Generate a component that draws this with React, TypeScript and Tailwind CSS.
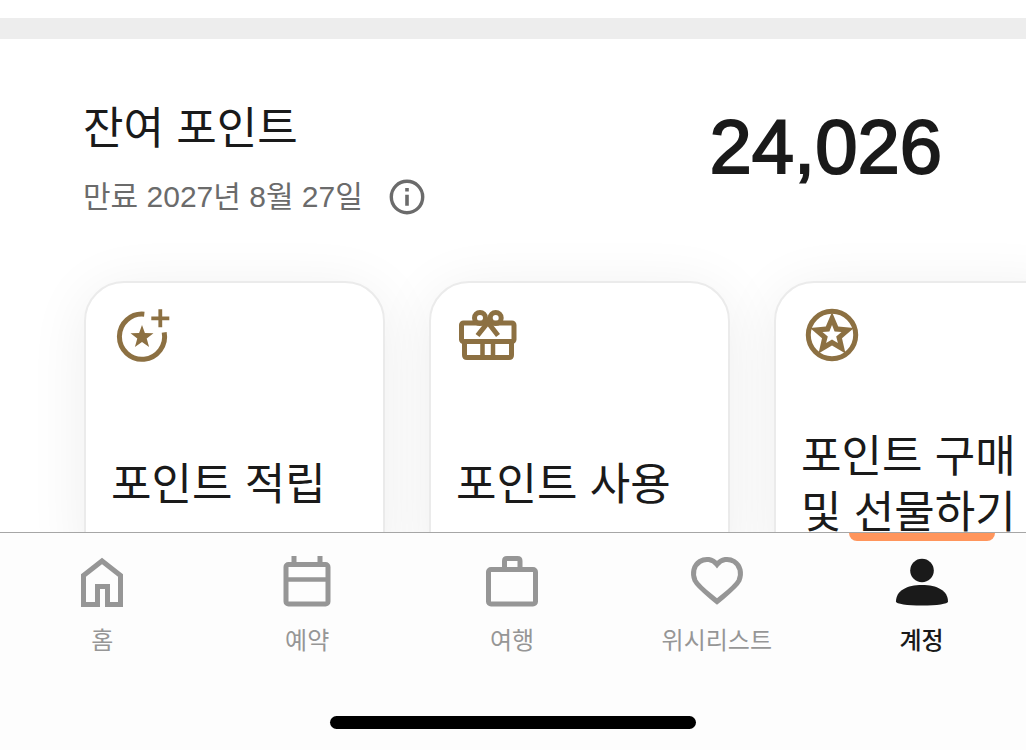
import React from "react";

type IconProps = { className?: string };

function EarnIcon() {
  return (
    <svg width="64" height="64" viewBox="0 0 64 64" fill="none" aria-hidden="true" className="text-[#8c7042]">
      <path d="M33.3 10.2A22.6 22.6 0 1 0 53.2 28.4" stroke="currentColor" strokeWidth="5" />
      <path d="M49.3 5.3v18M40.3 14.3h18" stroke="currentColor" strokeWidth="3.8" />
      <path d="M31 21l2.9 8.1 8.6.2-6.8 5.3 2.4 8.3-7.1-4.9-7.1 4.9 2.4-8.3-6.8-5.3 8.6-.2z" fill="currentColor" />
    </svg>
  );
}

function GiftIcon() {
  return (
    <svg width="64" height="64" viewBox="0 0 64 64" fill="none" stroke="currentColor" strokeWidth="5" aria-hidden="true" className="text-[#8c7042]">
      <rect x="5.5" y="19" width="52.5" height="18.5" rx="2" />
      <path d="M8.5 38v13q0 2.5 2.5 2.5h42q2.5 0 2.5-2.5V38" />
      <path d="M26.5 38v15M37 38v15" strokeWidth="4.5" />
      <circle cx="24" cy="14" r="5.5" />
      <circle cx="39.7" cy="14" r="5.5" />
      <path d="M35.5 14L21.5 31.5M28.5 14L42 31.5" />
    </svg>
  );
}

function StarIcon() {
  return (
    <svg width="64" height="64" viewBox="0 0 64 64" fill="none" aria-hidden="true" className="text-[#8c7042]">
      <circle cx="31" cy="31" r="23.7" stroke="currentColor" strokeWidth="5" />
      <path
        fill="currentColor"
        fillRule="evenodd"
        d="M31 8L37.200 22.500L52.900 23.900L41 34.200L44.500 49.600L31 41.500L17.500 49.600L21 34.200L9.100 23.900L24.800 22.500zM31 21L33.600 27.400L40.500 27.900L35.200 32.400L36.900 39.100L31 35.400L25.100 39.100L26.800 32.400L21.500 27.900L28.400 27.400z"
      />
    </svg>
  );
}

function InfoIcon() {
  return (
    <svg width="36" height="36" viewBox="0 0 36 36" fill="none" aria-hidden="true">
      <circle cx="18" cy="18" r="15.7" stroke="currentColor" strokeWidth="3.4" />
      <path d="M16.2 9h3.6v3.6h-3.6zM16.2 15.8h3.6v11h-3.6z" fill="currentColor" />
    </svg>
  );
}

function HomeIcon() {
  return (
    <svg width="56" height="56" viewBox="0 0 56 56" fill="none" stroke="currentColor" strokeWidth="5" aria-hidden="true">
      <path d="M9.5 20.5L28 6l18.5 14.5V49.5H33.5V31.5H23.5V49.5H9.5z" />
    </svg>
  );
}

function CalendarIcon() {
  return (
    <svg width="56" height="56" viewBox="0 0 56 56" fill="none" stroke="currentColor" strokeWidth="5" aria-hidden="true">
      <rect x="7" y="9.5" width="42" height="39.5" rx="2.5" />
      <path d="M15 1v8M41 1v8" />
      <path d="M7 24.500h42" strokeWidth="4.5" />
    </svg>
  );
}

function BriefcaseIcon() {
  return (
    <svg width="56" height="56" viewBox="0 0 56 56" fill="none" stroke="currentColor" strokeWidth="5" aria-hidden="true">
      <rect x="4.5" y="14.5" width="47" height="34.500" rx="2.5" />
      <path d="M20.5 14V6q0-2.500 2.500-2.500h10.500q2.500 0 2.500 2.500v8" />
    </svg>
  );
}

function HeartIcon() {
  return (
    <svg width="56" height="56" viewBox="0 0 56 56" fill="none" stroke="currentColor" strokeWidth="5" aria-hidden="true">
      <path d="M28 9.500C23.500 3.800 16.500 3 10.800 6.500C4.500 10.500 3 18.500 6 25.500C9 31.500 16 36.500 28 46.500C40 36.500 47 31.500 50 25.500C53 18.500 51.500 10.500 45.200 6.500C39.500 3 32.500 3.800 28 9.500z" />
    </svg>
  );
}

function AccountIcon() {
  return (
    <svg width="56" height="56" viewBox="0 0 56 56" fill="currentColor" aria-hidden="true">
      <circle cx="28" cy="15.500" r="11.800" />
      <path d="M2 46.5C2 35.5 13 30 28 30s26 5.500 26 16.500c0 2.500-11 4-26 4S2 49 2 46.500z" />
    </svg>
  );
}

type Item = { label: string; Icon: (props: IconProps) => React.ReactElement };

const cards: Item[] = [
  { label: "포인트 적립", Icon: EarnIcon },
  { label: "포인트 사용", Icon: GiftIcon },
  { label: "포인트 구매 및 선물하기", Icon: StarIcon },
];

const tabs: Item[] = [
  { label: "홈", Icon: HomeIcon },
  { label: "예약", Icon: CalendarIcon },
  { label: "여행", Icon: BriefcaseIcon },
  { label: "위시리스트", Icon: HeartIcon },
  { label: "계정", Icon: AccountIcon },
];

export default function App() {
  const active = "계정";
  return (
    <div className="flex h-screen flex-col overflow-hidden bg-white font-['Liberation_Sans','Noto_Sans_CJK_KR',sans-serif] text-[#1a1a1a]">
      <main className="min-h-0 flex-1 overflow-hidden">
        <div className="mt-[18px] h-[21px] bg-[#ededed]" />
        <section>
          <header className="flex items-start justify-between pt-[62px] pr-[84px] pl-[83px]">
            <div>
              <h1 className="text-[44px] leading-[56px]">잔여 포인트</h1>
              <div className="mt-[15px] flex items-center gap-[26px] text-[#6b6b6b]">
                <p className="text-[30px] leading-[50px]">만료 2027년 8월 27일</p>
                <button type="button" aria-label="포인트 만료 안내">
                  <InfoIcon />
                </button>
              </div>
            </div>
            <p className="pt-[6px] text-[76px] leading-[80px] [-webkit-text-stroke:2px_#1a1a1a]">24,026</p>
          </header>
          <div className="flex gap-11 overflow-hidden px-[84px] pt-[59px]">
            {cards.map(({ label, Icon }) => (
              <button
                key={label}
                type="button"
                className="flex w-[301px] shrink-0 flex-col rounded-[40px] border-2 border-[#ebebeb] bg-white px-[25px] pt-[21px] pb-8 text-left shadow-[0_8px_60px_rgba(0,0,0,0.07)]"
              >
                <Icon />
                <span className="mt-[61px] flex h-28 items-center text-[44px] leading-[56px] break-keep">{label}</span>
              </button>
            ))}
          </div>
        </section>
      </main>
      <footer className="shrink-0 border-t border-[#a6a6a6] bg-[#fdfdfd]">
        <nav className="flex pr-0.5">
          {tabs.map(({ label, Icon }) => (
            <a
              key={label}
              href="#"
              aria-current={label === active ? "page" : undefined}
              className={
                label === active
                  ? "flex flex-1 flex-col items-center font-medium text-[#1a1a1a]"
                  : "flex flex-1 flex-col items-center text-[#969696]"
              }
            >
              <span className={label === active ? "h-2 w-[146px] rounded-b-lg bg-[#ff955c]" : "h-2"} />
              <span className="mt-[14px]">
                <Icon />
              </span>
              <span className="mt-[14px] text-2xl leading-8">{label}</span>
            </a>
          ))}
        </nav>
        <div className="flex justify-center pt-[59px] pb-[21px]">
          <div className="h-[13px] w-[366px] rounded-full bg-black" />
        </div>
      </footer>
    </div>
  );
}
